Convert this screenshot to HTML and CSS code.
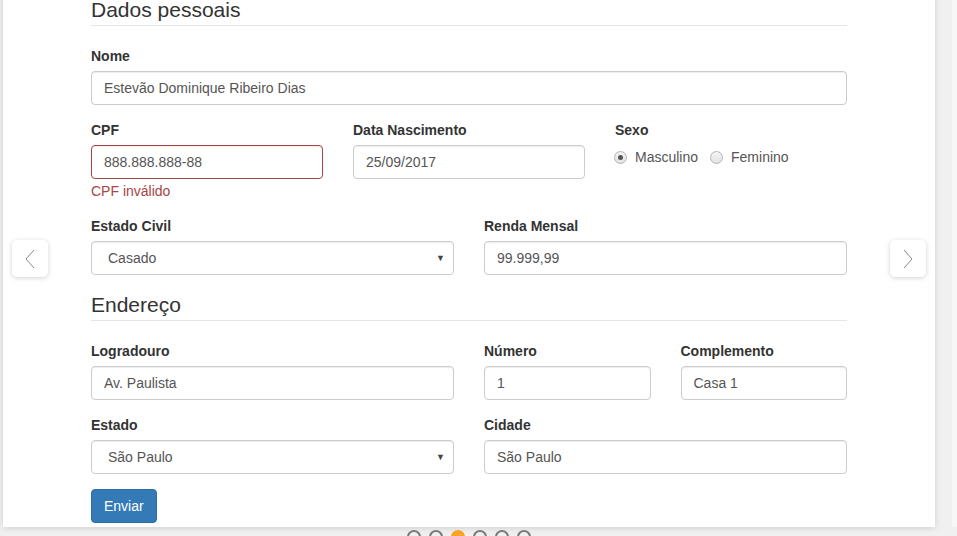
FILE: index.html
```html
<!DOCTYPE html>
<html lang="pt-BR">
<head>
<meta charset="utf-8">
<title>Cadastro</title>
<link rel="stylesheet" href="styles.css">
</head>
<body>
<div class="viewport">
  <div class="track">
    <div class="slide">
      <form class="form">
        <fieldset>
          <legend>Dados pessoais</legend>
          <div class="row">
            <div class="group col-12">
              <label class="lbl">Nome</label>
              <input class="ctl" type="text" value="Estevão Dominique Ribeiro Dias">
            </div>
          </div>
          <div class="row">
            <div class="group col-4 has-error">
              <label class="lbl">CPF</label>
              <input class="ctl" type="text" value="888.888.888-88">
              <span class="help">CPF inválido</span>
            </div>
            <div class="group col-4">
              <label class="lbl">Data Nascimento</label>
              <input class="ctl" type="text" value="25/09/2017">
            </div>
            <div class="group col-4">
              <label class="lbl">Sexo</label>
              <div class="radios">
                <span class="radio"><span class="dot checked"></span>Masculino</span>
                <span class="radio"><span class="dot"></span>Feminino</span>
              </div>
            </div>
          </div>
          <div class="row">
            <div class="group col-6">
              <label class="lbl">Estado Civil</label>
              <div class="select">Casado<span class="caret">▼</span></div>
            </div>
            <div class="group col-6">
              <label class="lbl">Renda Mensal</label>
              <input class="ctl" type="text" value="99.999,99">
            </div>
          </div>
        </fieldset>
        <fieldset>
          <legend>Endereço</legend>
          <div class="row">
            <div class="group col-6">
              <label class="lbl">Logradouro</label>
              <input class="ctl" type="text" value="Av. Paulista">
            </div>
            <div class="group col-3">
              <label class="lbl">Número</label>
              <input class="ctl" type="text" value="1">
            </div>
            <div class="group col-3">
              <label class="lbl">Complemento</label>
              <input class="ctl" type="text" value="Casa 1">
            </div>
          </div>
          <div class="row">
            <div class="group col-6">
              <label class="lbl">Estado</label>
              <div class="select">São Paulo<span class="caret">▼</span></div>
            </div>
            <div class="group col-6">
              <label class="lbl">Cidade</label>
              <input class="ctl" type="text" value="São Paulo">
            </div>
          </div>
        </fieldset>
        <button class="btn" type="button">Enviar</button>
      </form>
    </div>
    <div class="slide next"></div>
  </div>
  <div class="dots">
    <span class="ind"></span><span class="ind"></span><span class="ind active"></span><span class="ind"></span><span class="ind"></span><span class="ind"></span>
  </div>
  <button class="arrow arrow-left" type="button" aria-label="Anterior">
    <svg width="10" height="20" viewBox="0 0 10 20"><path d="M9 1 L1 10 L9 19" fill="none" stroke="#888" stroke-width="1"/></svg>
  </button>
  <button class="arrow arrow-right" type="button" aria-label="Próximo">
    <svg width="10" height="20" viewBox="0 0 10 20"><path d="M1 1 L9 10 L1 19" fill="none" stroke="#888" stroke-width="1"/></svg>
  </button>
</div>
</body>
</html>
```

FILE: styles.css
```css
* { box-sizing: border-box; }
html, body { margin: 0; padding: 0; }
body {
  background: #f0f0f0;
  font-family: "Liberation Sans", Arial, sans-serif;
  font-size: 14px;
  line-height: 20px;
  color: #333;
  width: 957px;
  height: 536px;
  overflow: hidden;
}
.viewport {
  position: relative;
  width: 957px;
  height: 536px;
  overflow: hidden;
}
.track {
  display: flex;
  gap: 17px;
  padding-left: 3px;
  margin-top: -20px;
}
.slide {
  flex: 0 0 932px;
  width: 932px;
  background: #fff;
  box-shadow: 0 1px 6px rgba(0,0,0,0.14);
  padding: 15px 88px 4px 88px;
}
.slide.next {
  flex: 0 0 932px;
  background: #f7f7f7;
  box-shadow: none;
}
.form { margin: 0; }
fieldset { border: 0; margin: 0; padding: 0; min-width: 0; }
legend {
  display: block;
  width: 100%;
  padding: 0;
  margin: 0 0 20px;
  font-size: 21px;
  line-height: 30px;
  color: #333;
  border-bottom: 1px solid #e5e5e5;
}
.row {
  display: flex;
  gap: 30px;
}
.group { margin-bottom: 15px; min-width: 0; }
.col-12 { flex: 0 0 756px; }
.col-6 { flex: 0 0 363px; }
.col-4 { flex: 0 0 232px; }
.col-3 { flex: 0 0 166.5px; }
.lbl {
  display: block;
  font-weight: bold;
  margin-bottom: 5px;
  line-height: 20px;
}
.ctl, .select {
  display: block;
  width: 100%;
  height: 34px;
  padding: 6px 12px;
  font-family: "Liberation Sans", Arial, sans-serif;
  font-size: 14px;
  line-height: 20px;
  color: #555;
  background: #fff;
  border: 1px solid #ccc;
  border-radius: 4px;
  box-shadow: inset 0 1px 1px rgba(0,0,0,0.075);
  outline: none;
}
.select {
  position: relative;
  padding-left: 16px;
}
.caret {
  position: absolute;
  right: 8px;
  top: 8px;
  font-size: 9px;
  line-height: 16px;
  color: #444;
}
.has-error .ctl { border-color: #a94442; }
.help {
  display: block;
  margin-top: 2px;
  color: #a94442;
  line-height: 20px;
}
.radios {
  display: flex;
  align-items: center;
  height: 24px;
  gap: 13px;
  color: #555;
}
.radio { display: flex; align-items: center; }
.dot {
  position: relative;
  width: 13px;
  height: 13px;
  margin-left: -1px;
  margin-right: 8px;
  border-radius: 50%;
  border: 1px solid #b3b3b3;
  background: linear-gradient(#f4f4f4, #e2e2e2);
}
.dot.checked::after {
  content: "";
  position: absolute;
  left: 3px;
  top: 3px;
  width: 5px;
  height: 5px;
  border-radius: 50%;
  background: #555;
}
.btn {
  display: block;
  height: 34px;
  padding: 6px 12px;
  font-family: "Liberation Sans", Arial, sans-serif;
  font-size: 14px;
  line-height: 20px;
  color: #fff;
  background: #337ab7;
  border: 1px solid #2e6da4;
  border-radius: 4px;
  margin-top: 0;
}
.dots {
  display: flex;
  justify-content: center;
  gap: 8px;
  width: 938px;
  margin-top: 3px;
}
.ind {
  width: 14px;
  height: 14px;
  border-radius: 50%;
  border: 2px solid #7a7a7a;
  background: #f0f0f0;
}
.ind.active {
  border-color: #f5a623;
  background: #f5a623;
}
.arrow {
  position: absolute;
  top: 240px;
  width: 36px;
  height: 37px;
  padding: 0;
  border: 0;
  border-radius: 5px;
  background: #fff;
  box-shadow: 0 1px 5px rgba(0,0,0,0.18);
  display: flex;
  align-items: center;
  justify-content: center;
}
.arrow-left { left: 12px; }
.arrow-right { left: 890px; }
```
